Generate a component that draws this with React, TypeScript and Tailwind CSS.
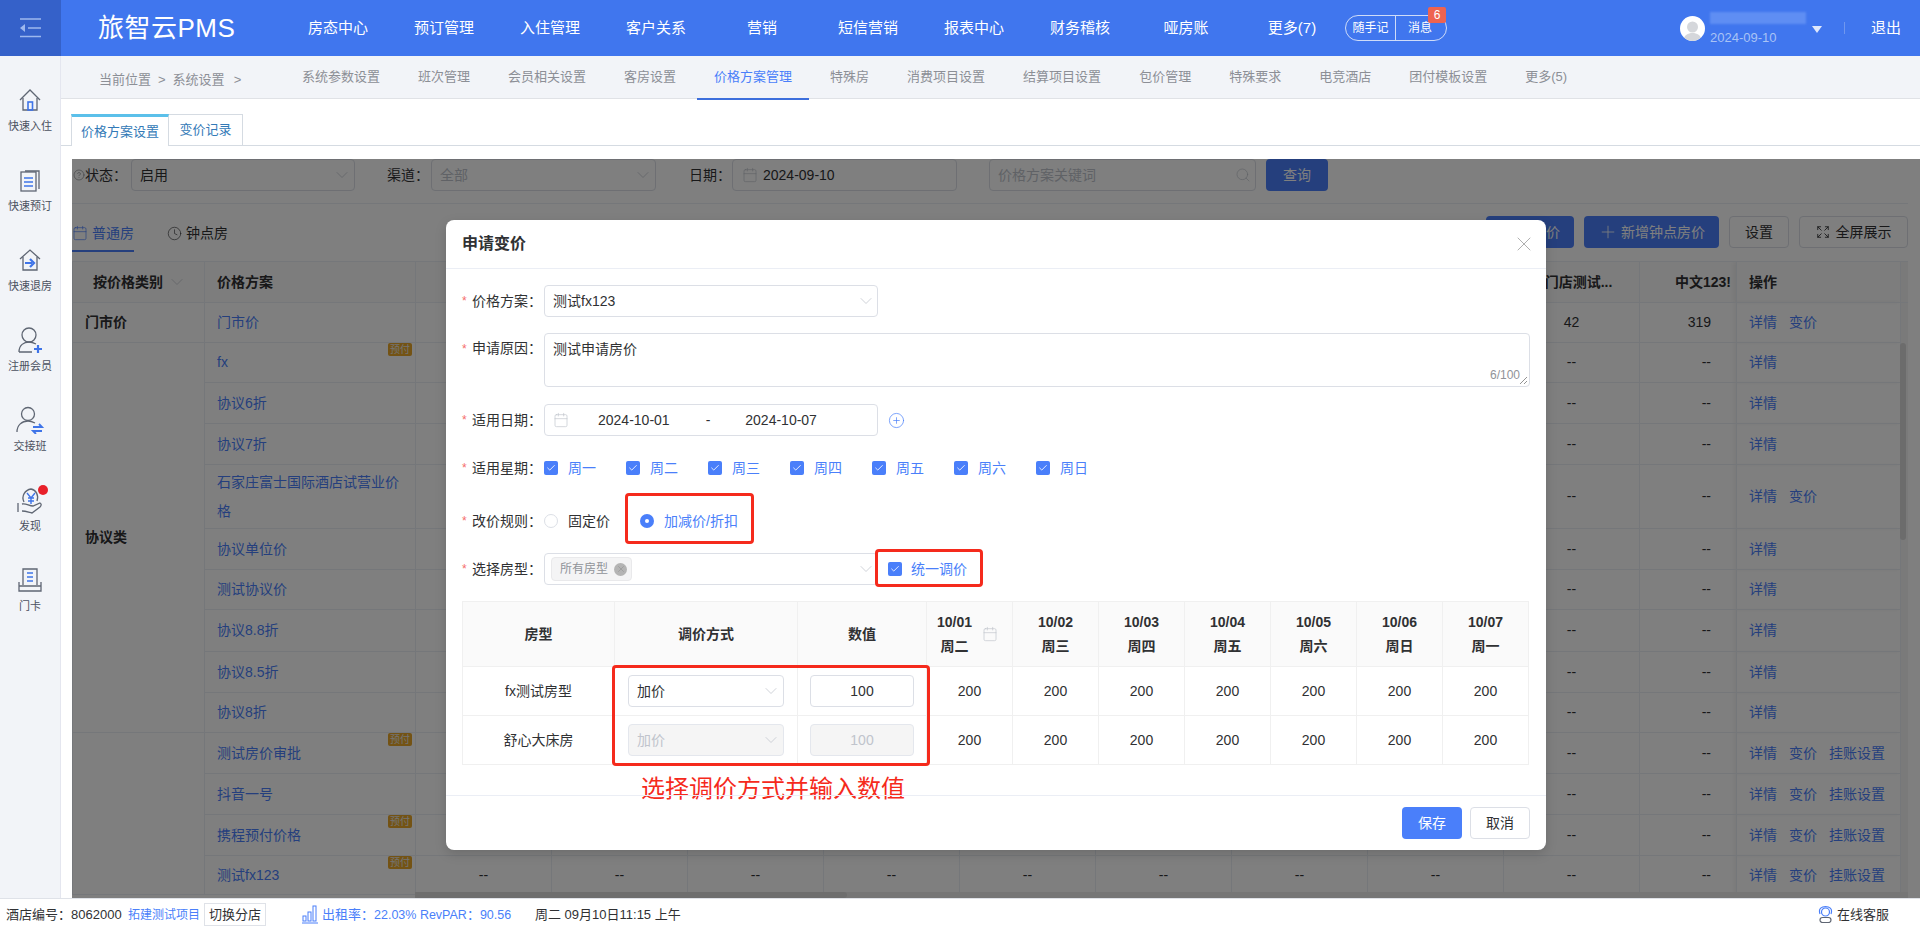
import React from 'react';
import { ChevronDown, X, Calendar, Search, Plus, CirclePlus, Clock, Expand, Check, CircleHelp } from 'lucide-react';

const NAV = ['房态中心', '预订管理', '入住管理', '客户关系', '营销', '短信营销', '报表中心', '财务稽核', '哑房账', '更多(7)'];
const SUB = ['系统参数设置', '班次管理', '会员相关设置', '客房设置', '价格方案管理', '特殊房', '消费项目设置', '结算项目设置', '包价管理', '特殊要求', '电竞酒店', '团付模板设置', '更多(5)'];

const g = '#5f6673';
const b = '#3f74e8';
const HomeIcon = () => (
  <svg width="24" height="24" viewBox="0 0 24 24" fill="none" strokeWidth="1.3">
    <path d="M2 12 L12 2 L22 12" stroke={g} />
    <path d="M5 10 V22 H19 V10" stroke={g} />
    <rect x="10" y="14" width="4.5" height="8" stroke={b} strokeWidth="1.6" />
  </svg>
);
const DocIcon = () => (
  <svg width="24" height="24" viewBox="0 0 24 24" fill="none" strokeWidth="1.3">
    <path d="M7 3 H21 V21" stroke={g} />
    <rect x="3" y="4" width="15" height="19" stroke={g} />
    <path d="M6 10 H15 M6 14 H15 M6 18 H15" stroke={b} strokeWidth="1.6" />
  </svg>
);
const ExitIcon = () => (
  <svg width="24" height="24" viewBox="0 0 24 24" fill="none" strokeWidth="1.3">
    <path d="M2 11 L12 2 L22 11" stroke={g} />
    <path d="M5 9 V22 H19 V9" stroke={g} />
    <path d="M7 15 H14 M12 11 L16 15 L12 19" stroke={b} strokeWidth="2.2" />
  </svg>
);
const UserAddIcon = () => (
  <svg width="28" height="28" viewBox="0 0 28 28" fill="none" strokeWidth="1.3">
    <circle cx="13" cy="9" r="7" stroke={g} />
    <path d="M3 26 C3 19 8 16 13 16 C16 16 18 17 20 18 M3 26 H16" stroke={g} />
    <path d="M22 19 V27 M18 23 H26" stroke={b} strokeWidth="2.2" />
  </svg>
);
const UserSwapIcon = () => (
  <svg width="32" height="28" viewBox="0 0 32 28" fill="none" strokeWidth="1.3">
    <circle cx="14" cy="8" r="6.5" stroke={g} />
    <path d="M3 26 C3 19 8 15 14 15 C17 15 19 16 21 17" stroke={g} />
    <path d="M19 21 H28 L25 18 M28 25 H19 L22 28" stroke={b} strokeWidth="1.8" />
  </svg>
);
const FindIcon = () => (
  <svg width="28" height="28" viewBox="0 0 28 28" fill="none" strokeWidth="1.3">
    <path d="M8 16 C5 10 9 4 15 3 C20 4 23 9 21 15" stroke={g} />
    <path d="M11 7 L15 12 L19 7 M15 12 V18 M12 12 H18 M12 15 H18" stroke={b} strokeWidth="1.4" />
    <path d="M2 17 V26 M6 18 C10 17 13 20 17 20 L24 17 C26 18 25 20 24 21 L16 27 C12 26 9 25 6 25" stroke={g} />
  </svg>
);
const CardIcon = () => (
  <svg width="26" height="26" viewBox="0 0 26 26" fill="none" strokeWidth="1.3">
    <path d="M6 18 V2 H20 V18" stroke={g} />
    <path d="M10 6 H16 M10 10 H16 M10 14 H16" stroke={b} strokeWidth="1.6" />
    <path d="M2 15 V24 H24 V15 M2 19 H24" stroke={g} />
  </svg>
);

const SIDE: [string, React.ReactNode][] = [
  ['快速入住', <HomeIcon />],
  ['快速预订', <DocIcon />],
  ['快速退房', <ExitIcon />],
  ['注册会员', <UserAddIcon />],
  ['交接班', <UserSwapIcon />],
  ['发现', <FindIcon />],
  ['门卡', <CardIcon />],
];

type Row = { name: React.ReactNode; h: number; pre?: boolean; ops: string[]; vals?: [string, string] };
const R3 = ['详情', '变价', '挂账设置'];
const ROWS: Row[] = [
  { name: '门市价', h: 40, ops: ['详情', '变价'], vals: ['42', '319'] },
  { name: 'fx', h: 40, pre: true, ops: ['详情'] },
  { name: '协议6折', h: 41, ops: ['详情'] },
  { name: '协议7折', h: 41, ops: ['详情'] },
  { name: '石家庄富士国际酒店试营业价格', h: 64, ops: ['详情', '变价'] },
  { name: '协议单位价', h: 41, ops: ['详情'] },
  { name: '测试协议价', h: 40, ops: ['详情'] },
  { name: '协议8.8折', h: 42, ops: ['详情'] },
  { name: '协议8.5折', h: 41, ops: ['详情'] },
  { name: '协议8折', h: 40, ops: ['详情'] },
  { name: '测试房价审批', h: 41, pre: true, ops: R3 },
  { name: '抖音一号', h: 41, ops: R3 },
  { name: '携程预付价格', h: 41, pre: true, ops: R3 },
  { name: '测试fx123', h: 39, pre: true, ops: R3 },
];
const GROUPS: Record<number, [string, number]> = { 0: ['门市价', 1], 1: ['协议类', 9], 10: ['', 4] };
const MID = Array.from({ length: 9 });
const WEEK = ['周一', '周二', '周三', '周四', '周五', '周六', '周日'];
const DAYS: [string, string][] = [['10/01', '周二'], ['10/02', '周三'], ['10/03', '周四'], ['10/04', '周五'], ['10/05', '周六'], ['10/06', '周日'], ['10/07', '周一']];

const Chev = ({ c = 'text-[#c0c4cc]', s = 20 }: { c?: string; s?: number }) => <ChevronDown size={s} strokeWidth={0.9} className={c} />;

const Box = ({ className = '' }: { className?: string }) => (
  <span className={`flex h-[14px] w-[14px] shrink-0 items-center justify-center rounded-[2px] bg-[#4a7ffa] ${className}`}>
    <Check size={10} strokeWidth={2} className="text-white" />
  </span>
);

const Lbl = ({ t }: { t: string }) => (
  <div className="flex w-[82px] shrink-0 items-center text-[14px] text-[#303133]">
    <span className="w-[10px] text-[12px] text-[#f56c6c]">*</span>
    <span>{t}：</span>
  </div>
);

const FIELD = 'flex h-[32px] items-center rounded-[4px] border';
const ON = 'border-[#dcdfe6] bg-white';
const OFF = 'border-[#e4e7ed] bg-[#f5f5f5] text-[#c0c4cc]';

export default function App() {
  return (
    <div className="relative flex h-[929px] w-[1920px] flex-col overflow-hidden bg-white font-['Liberation_Sans','Noto_Sans_CJK_SC',sans-serif] text-[14px] text-[#303133]">
      {/* top bar */}
      <header className="flex h-14 shrink-0 items-center bg-[#4076ee] text-white">
        <div className="flex h-14 w-[61px] items-center justify-center bg-[#3561c9]">
          <svg width="22" height="20" viewBox="0 0 22 20" fill="none" stroke="#9db8ee" strokeWidth="1.6">
            <path d="M0 1 H21 M8 10 H21 M0 18.5 H21" />
            <path d="M5 6 V14 L0 10 Z" fill="#9db8ee" stroke="none" />
          </svg>
        </div>
        <div className="ml-[37px] w-[187px] text-[26px] leading-none tracking-[0.5px]">旅智云PMS</div>
        <nav className="flex">
          {NAV.map((n) => (
            <div key={n} className="w-[106px] text-center text-[15px]">{n}</div>
          ))}
        </nav>
        <div className="relative flex h-[26px] w-[102px] items-center rounded-full border border-[#cfdcf8] text-[12px]">
          <span className="w-[50px] border-r border-[#cfdcf8] text-center leading-[24px]">随手记</span>
          <span className="flex-1 pr-[2px] text-center">消息</span>
          <span className="absolute -top-[9px] right-0 flex h-4 w-[18px] items-center justify-center rounded-[2px] bg-[#ee6350] text-[12px]">6</span>
        </div>
        <div className="ml-[233px] flex h-[25px] w-[25px] items-end justify-center overflow-hidden rounded-full bg-white">
          <svg width="21" height="23" viewBox="0 0 21 23" fill="#d5d7db">
            <circle cx="10.5" cy="9" r="5.5" />
            <path d="M1 23 C2 17 6 15 10.5 15 C15 15 19 17 20 23 Z" />
          </svg>
        </div>
        <div className="relative ml-[5px] flex h-[32px] w-[109px] flex-col justify-end">
          <div className="absolute left-0 top-0 h-[12px] w-[96px] bg-[#5f8ef3] blur-[1px]" />
          <div className="text-[13px] leading-[13px] text-[#a9c3f5]">2024-09-10</div>
          <svg className="absolute right-[-3px] top-[14px]" width="10" height="7" viewBox="0 0 10 7" fill="#dfe8fb">
            <path d="M0 0 H10 L5 7 Z" />
          </svg>
        </div>
        <div className="ml-[25px] h-[12px] w-px bg-[#6f97ef]" />
        <div className="ml-[26px] text-[15px]">退出</div>
      </header>

      <div className="flex min-h-0 flex-1">
        {/* side rail */}
        <aside className="w-[61px] shrink-0 border-r border-[#e4e6ef] bg-[#f2f4f8] pt-[30px]">
          {SIDE.map(([t, ic]) => (
            <div key={t} className="relative flex h-[80px] flex-col items-center">
              <div className="flex h-[28px] items-center justify-center">{ic}</div>
              <div className="mt-[4px] text-[11px] leading-[16px] text-[#4b5160]">{t}</div>
              {t === '发现' && <span className="absolute left-[38px] top-[-1px] h-[10px] w-[10px] rounded-full bg-[#e8202a]" />}
            </div>
          ))}
        </aside>

        <main className="flex min-w-0 flex-1 flex-col">
          {/* secondary nav */}
          <div className="flex h-[43px] shrink-0 border-b border-[#e0e2e6] bg-[#f2f4f8] text-[13px] text-[#8c8f96]">
            <div className="flex w-[224px] shrink-0 items-center pl-[38px] pt-[5px]">
              <span>当前位置</span><span className="ml-[7px]">&gt;</span><span className="ml-[7px]">系统设置</span><span className="ml-[9px]">&gt;</span>
            </div>
            <div className="flex">
              {SUB.map((s) => (
                <div key={s} className={`mr-[4px] flex h-[44px] items-center px-[17px] ${s === '价格方案管理' ? 'border-b-2 border-[#3d6fdc] text-[#4a7ffa]' : 'border-b-2 border-transparent'}`}>{s}</div>
              ))}
            </div>
          </div>

          {/* page tabs */}
          <div className="flex h-[47px] shrink-0 items-end border-b border-[#d5dbe2] pl-[10px] text-[13px] text-[#337ab7]">
            <div className="-mb-px flex h-[32px] w-[98px] items-center justify-center border-x border-[#d5dbe2] border-t-[3px] border-t-[#5bc0ea] bg-white">价格方案设置</div>
            <div className="flex h-[31px] w-[74px] items-center justify-center border-r border-t border-[#d5dbe2]">变价记录</div>
          </div>

          {/* page content, dimmed */}
          <div className="relative ml-[11px] mt-[13px] min-h-0 flex-1 overflow-hidden">
            <div className="mr-[12px] flex h-[45px] items-start border-b border-[#ebeef5]">
              <div className="flex w-[59px] items-center pl-[1px] leading-[32px]"><CircleHelp size={12} strokeWidth={1} className="text-[#606266]" /><span>状态：</span></div>
              <div className={`${FIELD} ${ON} w-[224px] justify-between pl-2 pr-[2px]`}>启用<Chev /></div>
              <div className="ml-[32px] w-[44px] leading-[32px]">渠道：</div>
              <div className={`${FIELD} ${ON} w-[225px] justify-between pl-2 pr-[2px] text-[#c0c4cc]`}>全部<Chev /></div>
              <div className="ml-[33px] w-[43px] leading-[32px]">日期：</div>
              <div className={`${FIELD} ${ON} w-[225px] pl-[9px]`}><Calendar size={16} strokeWidth={1} className="mr-[5px] text-[#c0c4cc]" />2024-09-10</div>
              <div className={`${FIELD} ${ON} ml-[32px] w-[267px] justify-between pl-2 pr-[4px] text-[#c0c4cc]`}>价格方案关键词<Search size={16} strokeWidth={1} /></div>
              <div className="ml-[10px] flex h-[32px] w-[62px] items-center justify-center rounded-[4px] bg-[#4a7ffa] text-white">查询</div>
            </div>

            <div className="mr-[12px] flex h-[57px] items-start justify-between">
              <div className="flex">
                <div className="flex h-[48px] w-[62px] items-center gap-[4px] border-b-2 border-[#4a7ffa] pt-[12px] text-[#4a7ffa]"><Calendar size={16} strokeWidth={1} />普通房</div>
                <div className="ml-[33px] flex h-[48px] items-center gap-[4px] pb-[2px] pt-[12px]"><Clock size={15} strokeWidth={1} />钟点房</div>
              </div>
              <div className="mt-[12px] flex gap-[10px]">
                <div className="flex h-[32px] w-[88px] items-center justify-end rounded-[4px] bg-[#4a7ffa] pr-[14px] text-white">新增房价</div>
                <div className="flex h-[32px] w-[135px] items-center justify-center gap-[3px] rounded-[4px] bg-[#4a7ffa] text-white"><Plus size={20} strokeWidth={1} />新增钟点房价</div>
                <div className="flex h-[32px] w-[60px] items-center justify-center rounded-[4px] border border-[#dcdfe6]">设置</div>
                <div className="flex h-[32px] w-[109px] items-center justify-center gap-[6px] rounded-[4px] border border-[#dcdfe6]"><Expand size={14} strokeWidth={1.5} />全屏展示</div>
              </div>
            </div>

            <div className="relative mr-[12px] h-[637px] overflow-hidden">
              <table className="w-[1836px] table-fixed border-collapse">
                <colgroup>
                  <col className="w-[132px]" />
                  <col className="w-[211px]" />
                  {MID.map((_, i) => <col key={i} className="w-[136px]" />)}
                  <col className="w-[97px]" />
                  <col className="w-[164px]" />
                  <col className="w-[8px]" />
                </colgroup>
                <thead>
                  <tr className="h-[41px] bg-[#fafafa] font-bold">
                    <th className="border border-[#ebeef5] pl-[20px] text-left"><span className="flex items-center gap-[4px]">按价格类别<Chev /></span></th>
                    <th className="border border-[#ebeef5] pl-[12px] text-left">价格方案</th>
                    {MID.map((_, i) => (
                      <th key={i} className="border border-[#ebeef5] text-center">{i === 8 ? '新门店测试...' : ''}</th>
                    ))}
                    <th className="border-y border-[#ebeef5] pr-[5px] text-right">中文123!</th>
                    <th className="border border-[#ebeef5] pl-[12px] text-left shadow-[-3px_0_4px_rgba(0,0,0,0.05)]">操作</th>
                    <th className="border-y border-[#ebeef5] bg-[#f5f5f5]" />
                  </tr>
                </thead>
                <tbody>
                  {ROWS.map((r, i) => (
                    <tr key={i} style={{ height: r.h }}>
                      {GROUPS[i] && (
                        <td rowSpan={GROUPS[i][1]} className="border border-[#ebeef5] pl-[12px] font-bold">{GROUPS[i][0]}</td>
                      )}
                      <td className="relative border border-[#ebeef5] pl-[12px] pr-[12px] leading-[29px] text-[#4a7ffa]">
                        {r.name}
                        {r.pre && <span className="absolute right-[3px] top-0 flex h-[13px] w-[24px] items-center justify-center rounded-[2px] bg-[#e8a628] text-[10px] leading-none text-[#e6e6e6]">预付</span>}
                      </td>
                      {MID.map((_, j) => (
                        <td key={j} className="border border-[#ebeef5] text-center">{j === 8 ? (r.vals ? r.vals[0] : '--') : i === 13 ? '--' : ''}</td>
                      ))}
                      <td className="border-y border-[#ebeef5] pr-[25px] text-right">{r.vals ? r.vals[1] : '--'}</td>
                      <td className="border border-[#ebeef5] pl-[12px] text-[#4a7ffa] shadow-[-3px_0_4px_rgba(0,0,0,0.05)]">
                        <span className="flex gap-[12px]">{r.ops.map((o) => <span key={o}>{o}</span>)}</span>
                      </td>
                      <td className="bg-[#f5f5f5]" />
                    </tr>
                  ))}
                </tbody>
              </table>
              <div className="absolute bottom-0 left-[343px] right-0 h-[6px] bg-[#ececec]">
                <div className="h-full w-[432px] rounded-r-[3px] bg-[#dcdcdc]" />
              </div>
              <div className="absolute right-[2px] top-[82px] h-[197px] w-[6px] rounded-[3px] bg-[#d8d8d8]" />
            </div>

            <div className="absolute inset-0 bg-black/50" />
          </div>
        </main>
      </div>

      {/* status bar */}
      <footer className="flex h-[31px] shrink-0 items-center border-t border-[#dfe2e8] bg-white pl-[6px] pt-[1px] text-[13px]">
        <span className="w-[122px]">酒店编号：8062000</span>
        <span className="w-[76px] text-[12px] text-[#4a7ffa]">拓建测试项目</span>
        <span className="flex h-[23px] w-[62px] items-center justify-center border border-[#dfe2e8]">切换分店</span>
        <svg className="ml-[36px]" width="16" height="19" viewBox="0 0 16 19" fill="none" stroke="#4a7ffa" strokeWidth="1">
          <rect x="1" y="11" width="3" height="5" />
          <rect x="6" y="7" width="3" height="9" />
          <rect x="11" y="1" width="3" height="15" />
          <path d="M0 18 H16" />
        </svg>
        <span className="ml-[4px] w-[213px] text-[#4a7ffa]">出租率：<span className="text-[12.5px]">22.03% RevPAR</span>：<span className="text-[12.5px]">90.56</span></span>
        <span>周二 09月10日11:15 上午</span>
        <span className="ml-auto flex items-center gap-[4px] pr-[31px]">
          <svg width="15" height="17" viewBox="0 0 15 17" fill="none" strokeWidth="1.2">
            <circle cx="7.5" cy="6" r="4" stroke="#4a7ffa" />
            <path d="M2 8 C0 2 4 0.7 7.5 0.7 C11 0.7 15 2 13 8" stroke="#4a7ffa" />
            <rect x="2" y="11.5" width="11" height="5" rx="2.5" stroke="#5f6673" />
          </svg>
          在线客服
        </span>
      </footer>

      {/* dialog */}
      <div className="absolute left-[446px] top-[220px] flex h-[630px] w-[1100px] flex-col rounded-[8px] bg-white shadow-[0_4px_12px_rgba(0,0,0,0.15)]">
        <div className="flex h-[49px] shrink-0 items-center justify-between border-b border-[#ebeef5] pl-[16px] pr-[10px]">
          <span className="text-[16px] font-bold">申请变价</span>
          <X size={24} strokeWidth={0.8} className="text-[#9a9a9a]" />
        </div>
        <div className="min-h-0 flex-1 pl-[16px] pt-[16px]">
          <div className="flex h-[32px] items-center">
            <Lbl t="价格方案" />
            <div className={`${FIELD} ${ON} w-[334px] justify-between pl-[8px] pr-[1px]`}>测试fx123<Chev /></div>
          </div>
          <div className="mt-[16px] flex h-[54px] items-start">
            <div className="pt-[5px]"><Lbl t="申请原因" /></div>
            <div className="relative h-[54px] w-[986px] rounded-[4px] border border-[#dcdfe6] pl-[8px] pt-[4px] leading-[22px]">
              测试申请房价
              <span className="absolute bottom-[5px] right-[9px] text-[12px] leading-none text-[#909399]">6/100</span>
              <svg className="absolute bottom-[1px] right-[1px]" width="9" height="9" viewBox="0 0 9 9" stroke="#777" strokeWidth="0.8"><path d="M1 8 L8 1 M5 8 L8 5" /></svg>
            </div>
          </div>
          <div className="mt-[17px] flex h-[32px] items-center">
            <Lbl t="适用日期" />
            <div className={`${FIELD} ${ON} w-[334px] pl-[8px]`}>
              <Calendar size={16} strokeWidth={1} className="text-[#c0c4cc]" />
              <span className="ml-[29px]">2024-10-01</span>
              <span className="ml-[36px]">-</span>
              <span className="ml-[35px]">2024-10-07</span>
            </div>
            <CirclePlus size={17} strokeWidth={1} className="ml-[10px] text-[#4a7ffa]" />
          </div>
          <div className="mt-[16px] flex h-[32px] items-center">
            <Lbl t="适用星期" />
            <div className="flex">
              {WEEK.map((w) => (
                <div key={w} className="flex w-[82px] items-center gap-[10px] text-[#4a7ffa]"><Box />{w}</div>
              ))}
            </div>
          </div>
          <div className="mt-[21px] flex h-[32px] items-center">
            <Lbl t="改价规则" />
            <span className="h-[14px] w-[14px] rounded-full border border-[#dcdfe6]" />
            <span className="ml-[10px]">固定价</span>
            <span className="ml-[30px] flex h-[14px] w-[14px] items-center justify-center rounded-full bg-[#4a7ffa]"><span className="h-[4px] w-[4px] rounded-full bg-white" /></span>
            <span className="ml-[10px] text-[#4a7ffa]">加减价/折扣</span>
          </div>
          <div className="mt-[16px] flex h-[32px] items-center">
            <Lbl t="选择房型" />
            <div className={`${FIELD} ${ON} w-[334px] justify-between pl-[6px] pr-[1px]`}>
              <span className="flex h-[24px] w-[81px] items-center gap-[6px] rounded-[4px] border border-[#e9e9eb] bg-[#f4f4f5] pl-[8px] text-[12px] text-[#909399]">
                所有房型
                <span className="flex h-[13px] w-[13px] items-center justify-center rounded-full bg-[#b4b4b4] text-[#8a8a8a]"><X size={10} strokeWidth={1.2} /></span>
              </span>
              <Chev />
            </div>
            <span className="ml-[10px] flex items-center gap-[9px] text-[#4a7ffa]"><Box />统一调价</span>
          </div>
          <table className="mt-[16px] w-[1067px] table-fixed border-collapse text-center">
            <colgroup>
              <col className="w-[152px]" />
              <col className="w-[183px]" />
              <col className="w-[129px]" />
              {DAYS.map((d) => <col key={d[0]} className="w-[86px]" />)}
            </colgroup>
            <thead>
              <tr className="h-[65px] bg-[#fafafa] font-bold">
                <th className="border border-[#f0f0f0]">房型</th>
                <th className="border border-[#f0f0f0]">调价方式</th>
                <th className="border border-[#f0f0f0]">数值</th>
                {DAYS.map((d, i) => (
                  <th key={d[0]} className="border border-[#f0f0f0] leading-[24px]">
                    {i === 0 ? (
                      <div className="flex items-center pl-[10px]">
                        <div>{d[0]}<br />{d[1]}</div>
                        <Calendar size={16} strokeWidth={1} className="ml-[10px] text-[#c0c4cc]" />
                      </div>
                    ) : (<>{d[0]}<br />{d[1]}</>)}
                  </th>
                ))}
              </tr>
            </thead>
            <tbody>
              {([['fx测试房型', false], ['舒心大床房', true]] as [string, boolean][]).map(([n, dis]) => (
                <tr key={n} className="h-[49px]">
                  <td className="border border-[#f0f0f0]">{n}</td>
                  <td className="border border-[#f0f0f0] px-[13px]">
                    <div className={`${FIELD} justify-between pl-[8px] pr-[2px] text-left ${dis ? OFF : ON}`}>加价<Chev /></div>
                  </td>
                  <td className="border border-[#f0f0f0] px-[12px]">
                    <div className={`${FIELD} justify-center ${dis ? OFF : ON}`}>100</div>
                  </td>
                  {DAYS.map((d) => <td key={d[0]} className="border border-[#f0f0f0]">200</td>)}
                </tr>
              ))}
            </tbody>
          </table>
          <div className="ml-[179px] mt-[10px] text-[24px] leading-[28px] text-[#f52a1c]">选择调价方式并输入数值</div>
        </div>
        <div className="flex h-[55px] shrink-0 items-start justify-end gap-2 border-t border-[#ebeef5] pr-[16px] pt-[11px]">
          <div className="flex h-[32px] w-[60px] items-center justify-center rounded-[4px] bg-[#4a7ffa] text-white">保存</div>
          <div className="flex h-[32px] w-[60px] items-center justify-center rounded-[4px] border border-[#dcdfe6]">取消</div>
        </div>

        {/* red annotation frames drawn over the form */}
        <div className="pointer-events-none absolute left-[179px] top-[273px] h-[51px] w-[129px] rounded-[4px] border-[3px] border-[#f52a1c]" />
        <div className="pointer-events-none absolute left-[429px] top-[329px] h-[38px] w-[108px] rounded-[4px] border-[3px] border-[#f52a1c]" />
        <div className="pointer-events-none absolute left-[166px] top-[445px] h-[101px] w-[318px] rounded-[4px] border-[3px] border-[#f52a1c]" />
      </div>
    </div>
  );
}
